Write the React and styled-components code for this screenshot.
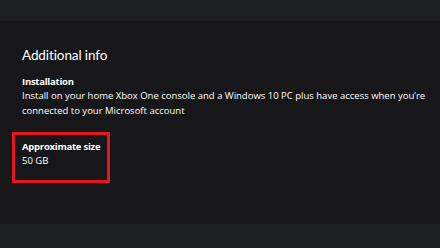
import styled, { createGlobalStyle } from 'styled-components'

const Global = createGlobalStyle`
html, body {
  margin: 0;
  padding: 0;
  background: #1e1f22;
}
body {
  font-family: "Open Sans", "Noto Sans", sans-serif;
  color: #ffffff;
}
`

const Page = styled.div`
width: 440px;
height: 248px;
display: flex;
flex-direction: column;
background: #1e1f22;
`

const Band = styled.div`
height: ${p => p.h}px;
flex: none;
`

const Panel = styled.section`
height: 203px;
background: #171719;
padding: 24px 0 0 22px;
box-sizing: border-box;
`

const Heading = styled.h2`
margin: 0;
font-family: Lato, "Open Sans", sans-serif;
font-size: 13.5px;
font-weight: 400;
line-height: 20px;
letter-spacing: -0.1px;
`

const Group = styled.div`
margin-top: ${p => p.top}px;
display: inline-flex;
flex-direction: column;
`

const Label = styled.div`
font-size: 9.5px;
font-weight: 700;
line-height: 14px;
letter-spacing: -0.25px;
`

const Text = styled.p`
margin: 0;
font-size: 9.5px;
line-height: 14.5px;
width: 410px;
`

const Highlight = styled.div`
margin: 0 0 0 -10px;
width: 98px;
height: 51px;
box-sizing: border-box;
border: 3px solid #e5141f;
padding: 5px 0 0 7px;
`

export default function App() {
  return (
    <Page>
      <Global />
      <Band h={21} />
      <Panel>
        <Heading>Additional info</Heading>
        <Group top={10}>
          <Label>Installation</Label>
          <Text>
            Install on your home Xbox One console and a Windows 10 PC plus have access when you’re connected to your Microsoft account
          </Text>
        </Group>
        <Group top={14}>
          <Highlight>
            <Label>Approximate size</Label>
            <Text as="div">50 GB</Text>
          </Highlight>
        </Group>
      </Panel>
      <Band h={24} />
    </Page>
  )
}
